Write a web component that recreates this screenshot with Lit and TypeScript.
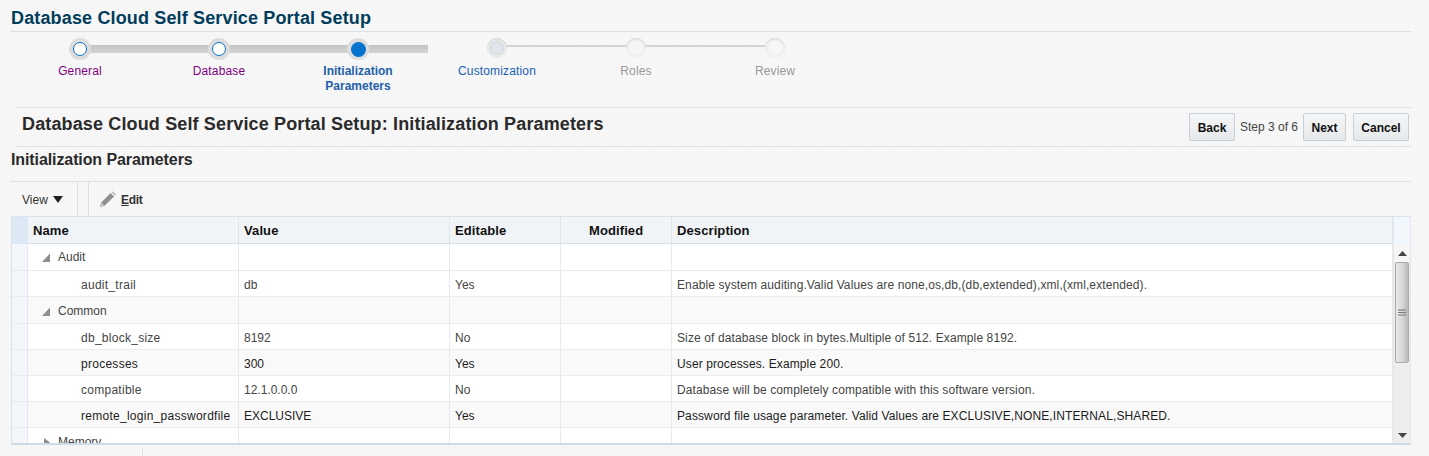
import { LitElement, html, css, nothing } from "lit";
import { customElement } from "lit/decorators.js";

type Step = { label: string[]; state: string };
const STEPS: Step[] = [
  { label: ["General"], state: "visited" },
  { label: ["Database"], state: "visited" },
  { label: ["Initialization", "Parameters"], state: "current" },
  { label: ["Customization"], state: "next" },
  { label: ["Roles"], state: "disabled" },
  { label: ["Review"], state: "disabled" },
];

type Row = { group?: "open" | "closed"; name: string; value?: string; editable?: string; desc?: string; alt?: boolean; dark?: boolean; first?: boolean; h: number };
const ROWS: Row[] = [
  { group: "open", name: "Audit", first: true, h: 27 },
  { name: "audit_trail", value: "db", editable: "Yes", desc: "Enable system auditing.Valid Values are none,os,db,(db,extended),xml,(xml,extended).", h: 26 },
  { group: "open", name: "Common", alt: true, h: 27 },
  { name: "db_block_size", value: "8192", editable: "No", desc: "Size of database block in bytes.Multiple of 512. Example 8192.", h: 26 },
  { name: "processes", value: "300", editable: "Yes", desc: "User processes. Example 200.", alt: true, dark: true, h: 26 },
  { name: "compatible", value: "12.1.0.0.0", editable: "No", desc: "Database will be completely compatible with this software version.", h: 26 },
  { name: "remote_login_passwordfile", value: "EXCLUSIVE", editable: "Yes", desc: "Password file usage parameter. Valid Values are EXCLUSIVE,NONE,INTERNAL,SHARED.", alt: true, dark: true, h: 26 },
  { group: "closed", name: "Memory", h: 27 },
];

@customElement("app-root")
export class AppRoot extends LitElement {
  static styles = css`
    :host { display: block; width: 1429px; height: 456px; overflow: hidden; font-family: "Liberation Sans", Arial, sans-serif; font-size: 12px; color: #333;
      background-color: #f7f7f7; background-image: conic-gradient(#f5f5f5 25%, #f8f8f8 0 50%, #f5f5f5 0 75%, #f8f8f8 0); background-size: 3px 3px; }
    .title { margin: 0 18px 0 10px; padding: 9px 0 0 1px; height: 22px; border-bottom: 1px solid #d6e1ea; font-size: 18px; line-height: 19px; font-weight: bold; color: #003d5b; letter-spacing: 0.15px; }
    .train { display: flex; padding-left: 10.5px; height: 75px; }
    .step { position: relative; width: 139px; display: flex; flex-direction: column; align-items: center; }
    .step::before { content: ""; position: absolute; left: 69px; top: 13px; width: 139px; height: 2px; background: #d4d4d4; }
    .step:last-child::before { display: none; }
    .step.visited::before, .step.current::before { height: 8px; background: linear-gradient(#c4c4c4, #d4d4d4); }
    .step.current::before { width: 70px; }
    .dot { position: relative; margin-top: 6px; width: 22px; height: 22px; border-radius: 50%; background: #dcdcdc; display: flex; align-items: center; justify-content: center; }
    .dot i { display: block; width: 14px; height: 14px; box-sizing: border-box; border-radius: 50%; }
    .visited .dot i { background: #fff; border: 1px solid #0572ce; }
    .current .dot i { background: #0572ce; width: 15px; height: 15px; }
    .next .dot, .disabled .dot { width: 20px; height: 20px; margin: 6px 0 2px; }
    .next .dot { background: #e9e9e9; box-shadow: inset 0 1px 1px #d4d4d4; }
    .next .dot i { background: #dfe5ea; border: 1px solid #d0d6dc; }
    .disabled .dot { background: #f0f0f0; box-shadow: inset 0 1px 1px #d4d4d4; }
    .disabled .dot i { background: #f4f6f8; }
    .lab { margin-top: 4px; text-align: center; line-height: 15px; letter-spacing: 0.15px; }
    .visited .lab { color: #800080; }
    .current .lab { color: #1f5fa8; font-weight: bold; letter-spacing: 0; }
    .next .lab { color: #1a5fb4; }
    .disabled .lab { color: #999; }
    .pagehead { margin: 0 18px 0 16px; height: 38px; border-top: 1px solid #d9e1e8; border-bottom: 1px solid #d9e1e8; display: flex; align-items: flex-start; justify-content: space-between; }
    .pagehead h1 { margin: 6px 0 0 6px; font-size: 18px; line-height: 21px; font-weight: bold; color: #2a2a2a; letter-spacing: 0.14px; }
    .actions { display: flex; align-items: center; margin-top: 5px; margin-right: 2px; }
    .btn { box-sizing: border-box; height: 28px; padding-top: 1px; border: 1px solid #c4ced7; border-radius: 2px; background: linear-gradient(#f4f6f7, #e6e9eb); font-weight: bold; color: #111; display: flex; align-items: center; justify-content: center; }
    .btn.back { width: 46px; }
    .btn.nxt { width: 43px; }
    .btn.cancel { width: 56px; margin-left: 7px; }
    .steptext { width: 68px; text-align: center; color: #444; }
    h2 { margin: 0 18px 0 10px; padding: 4px 0 0 1px; height: 35px; box-sizing: border-box; border-bottom: 1px solid #d9e1e8; font-size: 16px; line-height: 17px; font-weight: bold; color: #2a2a2a; letter-spacing: -0.1px; }
    .toolbar { margin-left: 11px; height: 34px; display: flex; align-items: stretch; }
    .view { width: 67px; box-sizing: border-box; padding: 1px 0 0 11px; border-right: 1px solid #dbe1e7; display: flex; align-items: center; gap: 5px; color: #333; }
    .tb-gap { width: 10px; border-right: 1px solid #dbe1e7; }
    .edit { padding: 1px 0 0 10px; display: flex; align-items: center; gap: 4px; font-weight: bold; font-size: 12px; color: #333; letter-spacing: -0.3px; }
    .edit span { margin-left: 1px; }
    .edit u { text-decoration: underline; }
    .table { margin-left: 11px; width: 1400px; height: 229px; box-sizing: border-box; border: 1px solid #d9e3eb; border-bottom: 2px solid #cddbe6; border-right-color: #e3e8ed; display: grid; grid-template-columns: 1381px 17px; grid-template-rows: 27px 1fr; overflow: hidden; background: #fff; }
    .row { display: grid; grid-template-columns: 16px 211px 211px 111px 111px 721px; box-sizing: border-box; }
    .head { grid-column: 1; height: 27px; background: #f1f4f7; border-bottom: 1px solid #d5dfe8; font-weight: bold; color: #111; font-size: 13px; letter-spacing: 0.1px; }
    .head > div { border-right: 1px solid #dfe5ea; padding-left: 5px; line-height: 27px; box-sizing: border-box; }
    .head > .sel { background: #dce8f3; padding: 0; border-right: 0; }
    .head > .modified { padding-left: 28px; }
    .head-end { background: #f2f7fb; border-bottom: 0; border-left: 1px solid #e3e9ee; }
    .body { grid-column: 1; height: 199px; overflow: hidden; }
    .body .row { background: #fff; border-bottom: 1px solid #ececec; }
    .body .row.alt { background: #f9f9f9; }
    .body .row > div { border-right: 1px solid #e6eaee; padding: 2px 0 0 5px; box-sizing: border-box; display: flex; align-items: center; white-space: nowrap; overflow: hidden; color: #444; }
    .body .row.grp > div { padding-top: 1px; }
    .body .row.first > div { padding-top: 0; }
    .body .row.dark > div { color: #1c1c1c; }
    .body .row > .sel { background: #f3f6fa; padding: 0; border-right: 1px solid #e2e8ee; }
    .body .row > .name.child { padding-left: 53px; letter-spacing: 0.27px; }
    .body .row > .name.group { padding-left: 12px; }
    .body .row > .desc { letter-spacing: 0.107px; }
    .tw { width: 12px; height: 12px; margin-right: 6px; flex: none; }
    .scroll { grid-column: 2; grid-row: 2; position: relative; background: #eee; border-left: 1px solid #e8e8e8; display: flex; flex-direction: column; align-items: center; }
    .arrow { height: 18px; width: 100%; flex: none; background: #f6f6f6; display: flex; align-items: center; justify-content: center; }
    .thumb { width: 14px; height: 101px; box-sizing: border-box; border: 1px solid #aaa; border-radius: 2px; background: linear-gradient(90deg, #e9e9e9, #d8d8d8 50%, #b9b9b9); display: flex; align-items: center; justify-content: center; flex: none; }
    .space { flex: 1; }
    .down { background: transparent; height: 15px; }
    .foot { margin: 3px 0 0 142px; width: 1px; height: 8px; background: #dadfe4; }
  `;

  private step(s: Step) {
    return html`<div class="step ${s.state}">
      <div class="dot"><i></i></div>
      <div class="lab">${s.label.map((l, i) => html`${i ? html`<br />` : nothing}${l}`)}</div>
    </div>`;
  }

  private row(r: Row) {
    const tri = r.group === "open"
      ? html`<svg class="tw" viewBox="0 0 12 12"><path d="M10 2.5V11H2z" fill="#8d8d8d"/></svg>`
      : html`<svg class="tw" viewBox="0 0 12 12"><path d="M4 2l6 4.5L4 11z" fill="#8d8d8d"/></svg>`;
    return html`<div class="row ${r.alt ? "alt" : ""} ${r.dark ? "dark" : ""} ${r.first ? "first" : ""} ${r.group ? "grp" : ""}" style="height:${r.h}px">
      <div class="sel"></div>
      <div class="name ${r.group ? "group" : "child"}">${r.group ? tri : nothing}${r.name}</div>
      <div>${r.value ?? ""}</div>
      <div>${r.editable ?? ""}</div>
      <div></div>
      <div class="desc">${r.desc ?? ""}</div>
    </div>`;
  }

  render() {
    return html`
      <div class="title">Database Cloud Self Service Portal Setup</div>
      <div class="train">${STEPS.map((s) => this.step(s))}</div>
      <div class="pagehead">
        <h1>Database Cloud Self Service Portal Setup: Initialization Parameters</h1>
        <div class="actions">
          <div class="btn back">Back</div>
          <span class="steptext">Step 3 of 6</span>
          <div class="btn nxt">Next</div>
          <div class="btn cancel">Cancel</div>
        </div>
      </div>
      <h2>Initialization Parameters</h2>
      <div class="toolbar">
        <div class="view">View
          <svg width="10" height="7" viewBox="0 0 10 7"><path d="M0 0h10L5 7z" fill="#222"/></svg>
        </div>
        <div class="tb-gap"></div>
        <div class="edit">
          <svg width="17" height="17" viewBox="0 0 17 17"><path d="M1 16l1.2-4.6L11.6 2l3.4 3.4-9.4 9.4z" fill="#8f8f8f"/><path d="M12.6 1l1-.6 3.2 3.2-.8 1z" fill="#a9a9a9"/><path d="M1 16l1.2-4.6 3.4 3.4z" fill="#c2c2c2"/></svg>
          <span><u>E</u>dit</span>
        </div>
      </div>
      <div class="table">
        <div class="row head">
          <div class="sel"></div><div>Name</div><div>Value</div><div>Editable</div><div class="modified">Modified</div><div>Description</div>
        </div>
        <div class="head-end"></div>
        <div class="body">${ROWS.map((r) => this.row(r))}</div>
        <div class="scroll">
          <div class="arrow"><svg width="9" height="5" viewBox="0 0 9 5"><path d="M0 5h9L4.5 0z" fill="#444"/></svg></div>
          <div class="thumb"><svg width="8" height="8" viewBox="0 0 8 8"><path d="M0 1h8M0 3.5h8M0 6h8" stroke="#777" stroke-width="1"/></svg></div>
          <div class="space"></div>
          <div class="arrow down"><svg width="9" height="5" viewBox="0 0 9 5"><path d="M0 0h9L4.5 5z" fill="#444"/></svg></div>
        </div>
      </div>
      <div class="foot"></div>
    `;
  }
}
